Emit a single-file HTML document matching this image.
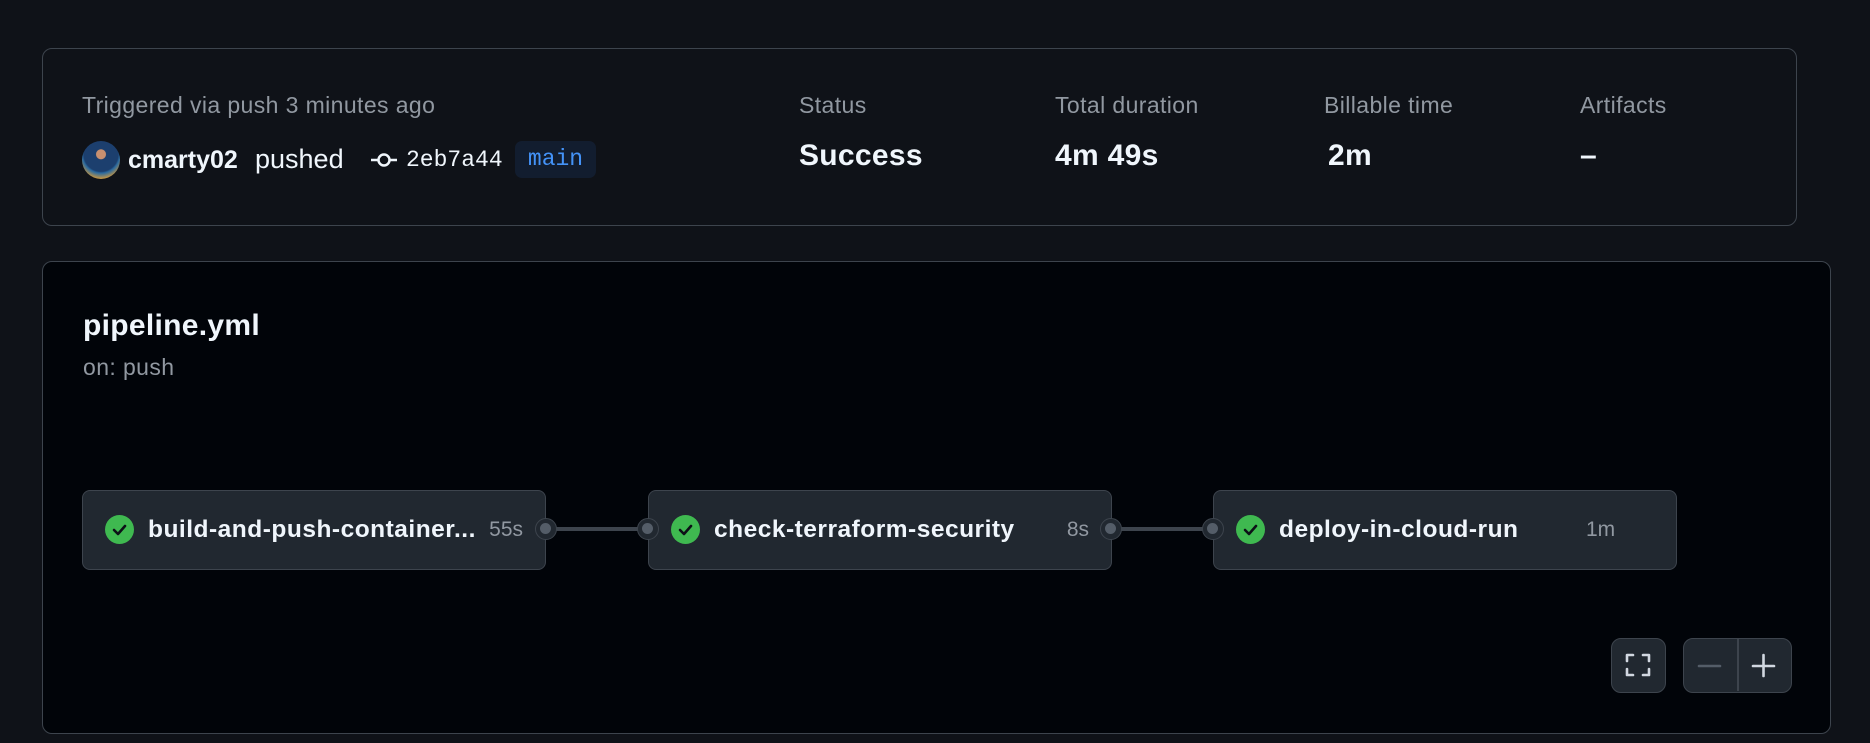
<!DOCTYPE html>
<html><head><meta charset="utf-8"><style>
*{box-sizing:border-box;margin:0;padding:0}
body{width:1870px;height:743px;background:#0f1218;font-family:"Liberation Sans","DejaVu Sans",sans-serif;position:relative;overflow:hidden;color:#f0f6fc}
.abs{position:absolute}
.card1{left:42px;top:48px;width:1755px;height:178px;border:1.5px solid #3d444d;border-radius:10px;background:#0f1218}
.card2{left:42px;top:261px;width:1789px;height:473px;border:1.5px solid #3d444d;border-radius:10px;background:#010409}
.lbl{font-size:23px;color:#9198a1;line-height:26px;letter-spacing:0.4px}
.val{font-size:30px;font-weight:bold;color:#f0f6fc;line-height:34px;letter-spacing:0.3px}
.job{top:490px;width:464px;height:80px;background:#212830;border:1.5px solid #3d444d;border-radius:8px}
.chk{position:absolute;left:22px;top:24px;width:29px;height:29px;border-radius:50%;background:#3fb950}
.jn{position:absolute;left:65px;top:24px;font-size:24.5px;font-weight:bold;color:#f0f6fc;line-height:30px;letter-spacing:0.5px}
.jd{position:absolute;top:25px;font-size:21px;color:#9198a1;line-height:28px}
.dot{position:absolute;width:22px;height:22px;border-radius:50%;background:#212830;border:1.5px solid #3d444d;top:518px}
.dot::after{content:"";position:absolute;left:4px;top:4px;width:11px;height:11px;border-radius:50%;background:#545d68}
.line{position:absolute;height:4px;background:#3d444d;top:527px}
.btn{background:#212830;border:1.5px solid #3d444d;border-radius:10px}
</style></head><body>
<div class="abs card1"></div>
<div class="abs lbl" style="left:82px;top:92px">Triggered via push 3 minutes ago</div>
<div class="abs" style="left:82px;top:141px;width:38px;height:38px;border-radius:50%;background:radial-gradient(circle at 50% 35%,#c89070 0 15%,#1c3f6e 17% 55%,#2a6aa0 60%,#d49a3a 80%,#5aa0c0 100%)"></div>
<div class="abs" style="left:128px;top:145px;font-size:25px;font-weight:bold;line-height:30px;color:#f0f6fc">cmarty02</div>
<div class="abs" style="left:255px;top:144px;font-size:27px;line-height:30px;color:#f0f6fc">pushed</div>
<svg class="abs" style="left:370px;top:150px" width="28" height="20" viewBox="0 0 28 20"><line x1="1" y1="10" x2="8" y2="10" stroke="#f0f6fc" stroke-width="2.5"/><circle cx="14" cy="10" r="5.5" fill="none" stroke="#f0f6fc" stroke-width="2.5"/><line x1="20" y1="10" x2="27" y2="10" stroke="#f0f6fc" stroke-width="2.5"/></svg>
<div class="abs" style="left:406px;top:147px;font-family:'Liberation Mono',monospace;font-size:23px;line-height:26px;color:#f0f6fc">2eb7a44</div>
<div class="abs" style="left:515px;top:141px;width:81px;height:37px;border-radius:7px;background:#121d2f;color:#4493f8;font-family:'Liberation Mono',monospace;font-size:23px;line-height:37px;text-align:center">main</div>
<div class="abs lbl" style="left:799px;top:92px">Status</div>
<div class="abs val" style="left:799px;top:139px">Success</div>
<div class="abs lbl" style="left:1055px;top:92px">Total duration</div>
<div class="abs val" style="left:1055px;top:139px">4m 49s</div>
<div class="abs lbl" style="left:1324px;top:92px">Billable time</div>
<div class="abs val" style="left:1328px;top:139px">2m</div>
<div class="abs lbl" style="left:1580px;top:92px">Artifacts</div>
<div class="abs val" style="left:1580px;top:139px">–</div>

<div class="abs card2"></div>
<div class="abs" style="left:83px;top:309px;font-size:30px;font-weight:bold;line-height:34px;letter-spacing:0.3px">pipeline.yml</div>
<div class="abs" style="left:83px;top:354px;font-size:23px;color:#9198a1;line-height:26px;letter-spacing:0.4px">on: push</div>

<div class="line" style="left:556px;width:92px"></div>
<div class="line" style="left:1121px;width:92px"></div>

<div class="abs job" style="left:82px"><div class="chk"><svg width="29" height="29" viewBox="0 0 29 29"><path d="M9 15l4 4 7-8" fill="none" stroke="#0d1117" stroke-width="2.6" stroke-linecap="round" stroke-linejoin="round"/></svg></div><div class="jn">build-and-push-container...</div><div class="jd" style="right:22px">55s</div></div>
<div class="abs job" style="left:648px"><div class="chk"><svg width="29" height="29" viewBox="0 0 29 29"><path d="M9 15l4 4 7-8" fill="none" stroke="#0d1117" stroke-width="2.6" stroke-linecap="round" stroke-linejoin="round"/></svg></div><div class="jn">check-terraform-security</div><div class="jd" style="right:22px">8s</div></div>
<div class="abs job" style="left:1213px"><div class="chk"><svg width="29" height="29" viewBox="0 0 29 29"><path d="M9 15l4 4 7-8" fill="none" stroke="#0d1117" stroke-width="2.6" stroke-linecap="round" stroke-linejoin="round"/></svg></div><div class="jn">deploy-in-cloud-run</div><div class="jd" style="left:372px">1m</div></div>

<div class="dot" style="left:535px"></div>
<div class="dot" style="left:637px"></div>
<div class="dot" style="left:1100px"></div>
<div class="dot" style="left:1202px"></div>

<div class="abs btn" style="left:1611px;top:638px;width:55px;height:55px"><svg width="52" height="52" viewBox="0 0 52 52"><path d="M15 22v-6h6M31 16h6v6M37 30v6h-6M21 36h-6v-6" fill="none" stroke="#d1d7e0" stroke-width="2.6" stroke-linecap="round" stroke-linejoin="round"/></svg></div>
<div class="abs btn" style="left:1683px;top:638px;width:109px;height:55px"><div class="abs" style="left:53px;top:0;width:1.5px;height:52px;background:#3d444d"></div><svg class="abs" style="left:0;top:0" width="106" height="52" viewBox="0 0 106 52"><line x1="15" y1="27" x2="36" y2="27" stroke="#545d68" stroke-width="2.6" stroke-linecap="round"/><line x1="69" y1="27" x2="90" y2="27" stroke="#d1d7e0" stroke-width="2.6" stroke-linecap="round"/><line x1="79.5" y1="16" x2="79.5" y2="37" stroke="#d1d7e0" stroke-width="2.6" stroke-linecap="round"/></svg></div>
</body></html>
